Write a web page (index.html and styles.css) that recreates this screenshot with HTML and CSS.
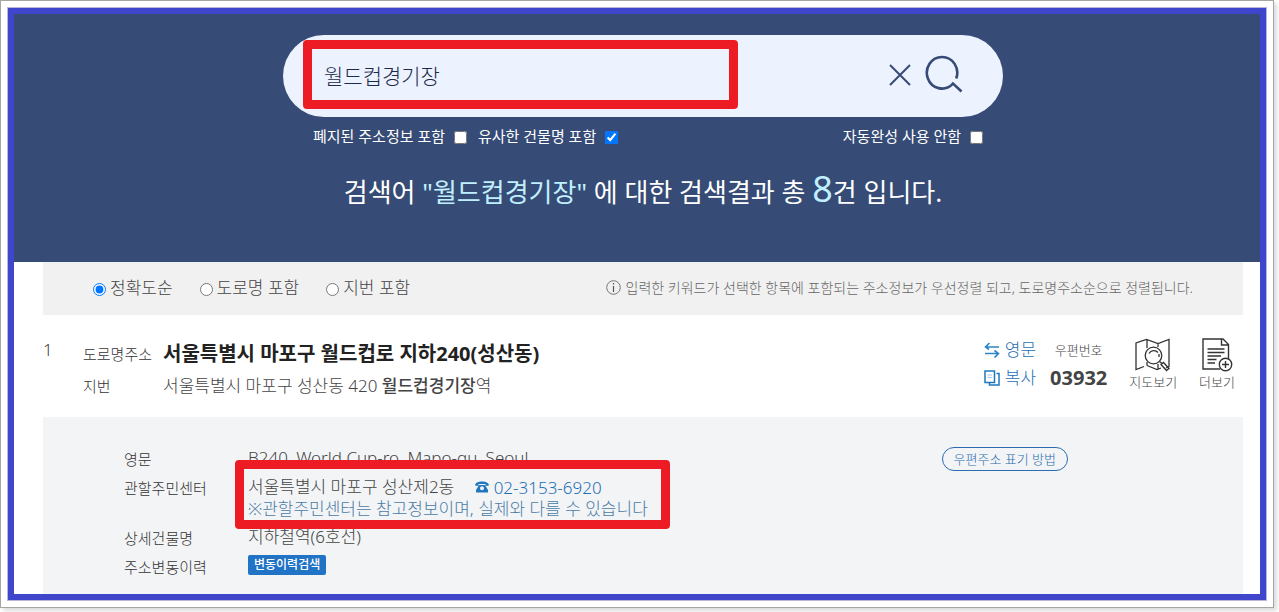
FILE: index.html
```html
<!DOCTYPE html>
<html lang="ko">
<head>
    <meta charset="UTF-8">
    <meta name="viewport" content="width=device-width, initial-scale=1.0">
    <title>주소 검색결과</title>
    <link rel="stylesheet" href="styles.css">
</head>

<body>
    <div class="shot">
        <div class="page">
            <header class="header">
                <form class="search">
                    <input class="search-input" type="text" value="월드컵경기장" aria-label="검색어">
                    <button class="icon-btn" type="button" aria-label="지우기">
                        <svg width="22" height="22" viewBox="0 0 22 22"><path d="M1 1L21 21M21 1L1 21" fill="none" stroke="#364b75" stroke-width="2"/></svg>
                    </button>
                    <button class="icon-btn" type="submit" aria-label="검색">
                        <svg width="38" height="40" viewBox="0 0 38 40"><path d="M31.2 23.5A15.2 15.8 0 1 0 27.3 29.4M27 27.6L36.5 36.5" fill="none" stroke="#364b75" stroke-width="2.6"/></svg>
                    </button>
                    <span class="mark mark-search"></span>
                </form>
                <div class="options">
                    <label>폐지된 주소정보 포함 <input type="checkbox"></label>
                    <label>유사한 건물명 포함 <input type="checkbox" checked></label>
                    <label class="option-last">자동완성 사용 안함 <input type="checkbox"></label>
                </div>
                <h1 class="summary">검색어 <em>"월드컵경기장"</em> 에 대한 검색결과 총 <em class="count">8</em>건 입니다.</h1>
            </header>

            <main class="content">
                <div class="sort">
                    <label><input type="radio" name="sort" checked>정확도순</label>
                    <label><input type="radio" name="sort">도로명 포함</label>
                    <label><input type="radio" name="sort">지번 포함</label>
                    <p class="notice">
                        <svg width="15" height="15" viewBox="0 0 15 15"><circle cx="7.5" cy="7.5" r="6.8" fill="none" stroke="#777"/><path d="M7.5 6V12M7.5 3V4.6" stroke="#555" stroke-width="1.2"/></svg>
                        입력한 키워드가 선택한 항목에 포함되는 주소정보가 우선정렬 되고, 도로명주소순으로 정렬됩니다.
                    </p>
                </div>

                <section class="result">
                    <span class="num">1</span>
                    <dl class="address">
                        <dt>도로명주소</dt>
                        <dd class="road">서울특별시 마포구 월드컵로 지하240(성산동)</dd>
                        <dt>지번</dt>
                        <dd>서울특별시 마포구 성산동 420 <b>월드컵경기장</b>역</dd>
                    </dl>
                    <div class="links">
                        <a href="#">
                            <svg width="16" height="16" viewBox="0 0 16 16" fill="none" stroke="#2a86c8" stroke-width="1.6"><path d="M15 5H1.5M5.5 1L1.5 5L5 7.5"/><path d="M1 11.5H14.5M10.5 8.5L14.5 11.5L10.5 15.5"/></svg>
                            영문
                        </a>
                        <a href="#">
                            <svg width="16" height="16" viewBox="0 0 16 16" fill="none" stroke="#1f78bd" stroke-width="1.5"><path d="M1 1H10.5V12.5H1Z"/><path d="M12.5 3.5H15V15H5.5V13"/><path d="M3.5 5H8M3.5 7.5H8" stroke="#a9c9e4" stroke-width="1"/></svg>
                            복사
                        </a>
                    </div>
                    <div class="zip">
                        <span>우편번호</span>
                        <strong>03932</strong>
                    </div>
                    <button class="tool" type="button">
                        <svg width="36" height="34" viewBox="0 0 36 34" fill="none" stroke="#333" stroke-width="1.3">
                            <path d="M9 28.5L1 31.5V5L11.5 1.5L23 5.5L34 1.5V28.5L31 30M12 1.5V10M23 5.5V9M12 27.5L22 31.5L26 30M12 24V27.5M23 26V31"/>
                            <circle cx="18.5" cy="17.5" r="8.3" fill="#fff"/>
                            <path d="M14 15.5A5.5 5.5 0 0 1 23 14.5M24 16V19"/>
                            <path d="M24.5 23.5L27 25.5M26 26.5L28.5 24.5L34 30.5L31.5 32.5Z"/>
                        </svg>
                        지도보기
                    </button>
                    <button class="tool" type="button">
                        <svg width="32" height="34" viewBox="0 0 32 34" fill="none" stroke="#333" stroke-width="1.4">
                            <path d="M19 31H2V1H22L27.5 6.5V21M20.5 1.5V7H27"/>
                            <path d="M6.5 11H23.5M6.5 14.5H23.5M6.5 18H20M6.5 21.5H15.5M6.5 25H14"/>
                            <circle cx="24.5" cy="26.5" r="6.2" fill="#fff"/>
                            <path d="M24.5 23V30M21 26.5H28"/>
                        </svg>
                        더보기
                    </button>
                </section>

                <section class="detail">
                    <dl class="detail-list">
                        <dt>영문</dt>
                        <dd>B240, World Cup-ro, Mapo-gu, Seoul</dd>
                        <dt>관할주민센터</dt>
                        <dd class="center">
                            서울특별시 마포구 성산제2동
                            <a class="tel" href="tel:02-3153-6920">
                                <svg width="14" height="12" viewBox="0 0 14 12" fill="#1f78bd"><path d="M0 4.5C0 -1 14 -1 14 4.5L10.5 5V3H3.5V5Z"/><path fill-rule="evenodd" d="M4 4H10L13 9V11.5H1V9ZM7 5.2A2 2 0 1 0 7 9.2A2 2 0 1 0 7 5.2Z"/></svg>
                                02-3153-6920
                            </a>
                            <p class="note">※관할주민센터는 참고정보이며, 실제와 다를 수 있습니다</p>
                            <span class="mark mark-center"></span>
                        </dd>
                        <dt>상세건물명</dt>
                        <dd>지하철역(6호선)</dd>
                        <dt>주소변동이력</dt>
                        <dd><button class="history" type="button">변동이력검색</button></dd>
                    </dl>
                    <a class="guide" href="#">우편주소 표기 방법</a>
                </section>
            </main>
        </div>
    </div>
</body>

</html>
```
FILE: styles.css
```css
* {
    box-sizing: border-box;
}
body {
    margin: 0;
    background-color: #fff;
    color: #444;
    font-family: "Noto Sans", "Noto Sans CJK KR", sans-serif;
    font-size: 17px;
    font-weight: 300;
    line-height: 24px;
}
dl, dd, p, h1 {
    margin: 0;
}
a {
    text-decoration: none;
}
svg {
    display: block;
    flex: none;
}
button, input {
    font-family: inherit;
    font-weight: inherit;
}
button {
    cursor: pointer;
}

.shot {
    margin: 0 5px 5px 0;
    padding: 7px;
    border: 1px solid #a5a5a5;
    box-shadow: 3px 3px 4px #ddd;
}
.page {
    border: 6px solid #4046cb;
    box-shadow: 0 0 0 1px #b8b6dc;
}

.header {
    padding: 21px 17px 47px 29px;
    background-color: #364b75;
    color: #fff;
}
.search {
    position: relative;
    display: flex;
    align-items: center;
    gap: 14px;
    max-width: 720px;
    height: 82px;
    margin: 0 auto;
    padding: 0 40px 2px 41px;
    border-radius: 41px;
    background-color: #ecf2fe;
}
.search-input {
    flex: 1;
    min-width: 0;
    padding: 0;
    border: 0;
    outline: 0;
    background: transparent;
    color: #1c2a4c;
    font-size: 21px;
}
.icon-btn {
    padding: 0;
    border: 0;
    background: transparent;
}
.mark {
    position: absolute;
    border: 9px solid #ed1c24;
    border-radius: 4px;
    pointer-events: none;
}
.mark-search {
    top: 5px;
    left: 20px;
    width: 435px;
    height: 69px;
}
.options {
    display: flex;
    gap: 11px;
    max-width: 720px;
    margin: 7px auto 0;
    padding: 0 20px 0 30px;
    font-size: 15px;
    font-weight: 400;
}
.options label {
    display: flex;
    align-items: center;
    gap: 9px;
}
.options input {
    margin: 2px 0 0;
}
.options .option-last {
    margin-left: auto;
}
.summary {
    margin-top: 18px;
    font-size: 26px;
    font-weight: 400;
    line-height: 45px;
    text-align: center;
}
.summary em {
    color: #c0f0ff;
    font-style: normal;
}
.summary .count {
    font-size: 36px;
}

.content {
    padding: 0 17px 0 29px;
}
.sort {
    display: flex;
    align-items: center;
    gap: 27px;
    height: 53px;
    padding: 0 50px 2px;
    background-color: #f1f1f1;
}
.sort label {
    display: flex;
    align-items: center;
    gap: 4px;
}
.sort input {
    margin: 3px 0 0;
}
.notice {
    display: flex;
    align-items: center;
    gap: 5px;
    margin-left: auto;
    color: #666;
    font-size: 14px;
}

.result {
    display: flex;
    height: 102px;
    padding: 23px 8px 0 0;
}
.num {
    width: 40px;
}
.address {
    flex: 1;
    display: grid;
    grid-template-columns: 80px 1fr;
    grid-auto-rows: 32px;
    line-height: 32px;
}
.address dt, .detail-list dt {
    color: #333;
    font-size: 15px;
}
.address .road {
    color: #222;
    font-size: 20px;
    font-weight: 700;
}
.address b {
    font-weight: 500;
}
.links {
    display: flex;
    flex-direction: column;
    gap: 4px;
}
.links a {
    display: flex;
    align-items: center;
    gap: 5px;
    color: #1f6fb5;
}
.zip {
    display: flex;
    flex-direction: column;
    gap: 4px;
    align-items: center;
    margin-left: 14px;
    font-size: 13px;
}
.zip strong {
    font-size: 20px;
    font-weight: 700;
}
.tool {
    display: flex;
    flex-direction: column;
    align-items: center;
    align-self: flex-start;
    margin-left: 22px;
    padding: 0;
    border: 0;
    background: transparent;
    color: #444;
    font-size: 13px;
    line-height: 20px;
}

.detail {
    display: flex;
    align-items: flex-start;
    padding: 30px 175px 15px 81px;
    background-color: #f3f4f6;
}
.detail-list {
    flex: 1;
    display: grid;
    grid-template-columns: 124px 1fr;
    row-gap: 5px;
}
.detail-list dd {
    line-height: 21px;
}
.detail-list .center {
    position: relative;
    margin-bottom: 2px;
}
.tel {
    display: inline-flex;
    align-items: center;
    gap: 5px;
    margin-left: 16px;
    color: #1f6fb5;
}
.note {
    color: #4a7ba6;
}
.mark-center {
    top: -16px;
    left: -13px;
    width: 435px;
    height: 69px;
}
.history {
    display: block;
    padding: 0 6px;
    border: 0;
    border-radius: 2px;
    background-color: #2173c6;
    color: #fff;
    font-size: 12px;
    font-weight: 500;
    line-height: 20px;
}
.guide {
    padding: 0 11px;
    border: 1px solid #2b6cb0;
    border-radius: 12px;
    color: #2b6cb0;
    font-size: 13px;
    line-height: 22px;
}
```
